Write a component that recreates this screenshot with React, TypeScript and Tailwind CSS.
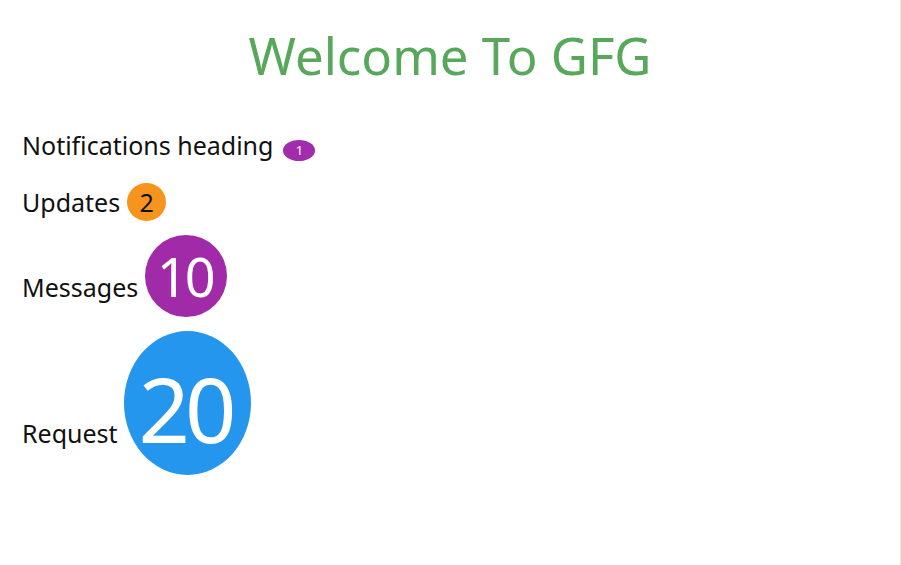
const font = { fontFamily: '"Noto Sans", "Open Sans", sans-serif' };

const Badge = ({ value, className }: { value: string; className: string }) => (
  <span className={`inline-flex items-center justify-center rounded-[50%] ${className}`}>{value}</span>
);

export default function App() {
  return (
    <div className="w-[901px] h-[565px] bg-white overflow-hidden flex" style={font}>
      <div className="flex-1 border-r border-[#e4ece4] px-[22px]">
        {/* heading */}
        <h1 className="text-center text-[51px] leading-none text-[#57a85b] pt-[30px]">
          Welcome To GFG
        </h1>

        <div className="mt-[52px] flex items-baseline text-[25px] leading-none text-[#111]">
          <span>Notifications heading</span>
          <Badge value="1" className="ml-[10px] w-[32px] h-[21px] bg-[#a12dad] text-white text-[13px]" />
        </div>

        <div className="mt-[22px] flex items-baseline text-[25px] leading-none text-[#111]">
          <span>Updates</span>
          <Badge value="2" className="ml-[7px] w-[39px] h-[38px] bg-[#f7941d] text-[#111] text-[25px]" />
        </div>

        <div className="mt-[14px] flex items-baseline text-[25px] leading-none text-[#111]">
          <span>Messages</span>
          <Badge value="10" className="ml-[7px] w-[82px] h-[82px] bg-[#a12aa8] text-white text-[54px] tracking-[-3px] pr-[3px]" />
        </div>

        <div className="mt-[14px] flex items-baseline text-[25px] leading-none text-[#111]">
          <span>Request</span>
          <Badge value="20" className="ml-[6px] w-[127px] h-[144px] bg-[#2496ee] text-white text-[90px] tracking-[-5px] pt-[10px] pr-[4px]" />
        </div>
      </div>
    </div>
  );
}
